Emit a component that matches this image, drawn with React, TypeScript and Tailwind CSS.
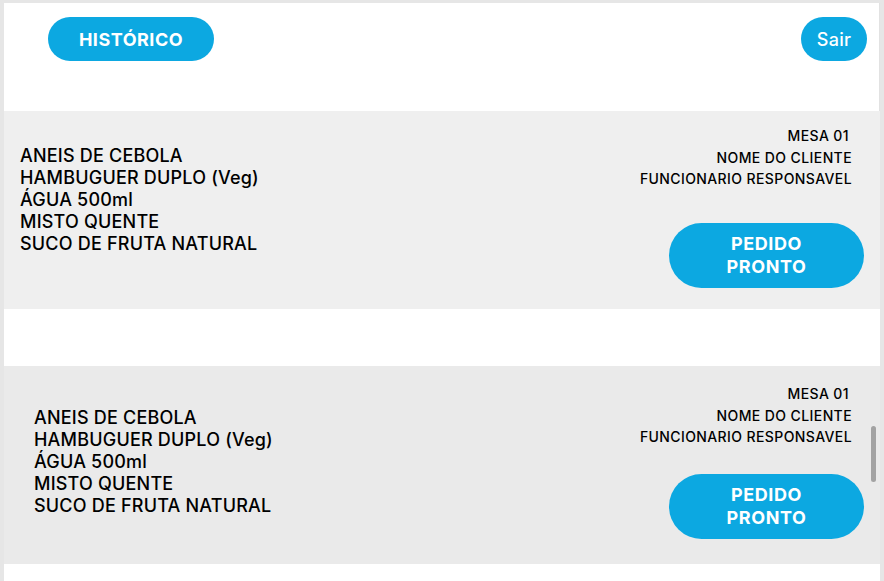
const itens = [
  "ANEIS DE CEBOLA",
  "HAMBUGUER DUPLO (Veg)",
  "ÁGUA 500ml",
  "MISTO QUENTE",
  "SUCO DE FRUTA NATURAL",
];

type PedidoProps = {
  bg: string;
  left: string;
  top: string;
  infoTop: string;
  btnTop: string;
};

const Pedido = ({ bg, left, top, infoTop, btnTop }: PedidoProps) => {
  return (
    <div className={`flex justify-between h-[198px] ${bg}`}>
      <ul className={`${left} ${top} text-[18px] leading-[22px] font-medium tracking-[0.2px] text-black`}>
        {itens.map((item) => (
          <li key={item}>{item}</li>
        ))}
      </ul>
      <div className={`flex flex-col items-end pr-4 ${infoTop}`}>
        <div className="mr-[12px] text-right text-[14px] leading-[21.5px] font-medium tracking-[0.4px] text-black">
          <p className="mr-[3px]">MESA 01</p>
          <p>NOME DO CLIENTE</p>
          <p>FUNCIONARIO RESPONSAVEL</p>
        </div>
        <button
          className={`${btnTop} w-[195px] h-[65px] rounded-full bg-[#0ca8e1] text-white font-bold text-[18px] leading-[23px] tracking-[0.6px]`}
        >
          PEDIDO
          <br />
          PRONTO
        </button>
      </div>
    </div>
  );
};

export default function App() {
  return (
    <div
      className="relative w-[884px] h-[581px] overflow-hidden bg-white border-t-[3px] border-l-4 border-r-4 border-[#e6e6e6]"
      style={{ fontFamily: "Inter, 'Noto Sans', sans-serif" }}
    >
      {/* topo */}
      <header className="flex justify-between items-start h-[108px] pt-[14px] pl-[44px] pr-3 border-r border-[#e2e2e2]">
        <button className="w-[166px] h-[44px] rounded-full bg-[#0ca8e1] text-white font-bold text-[18px] tracking-[0.5px]">
          HISTÓRICO
        </button>
        <button className="w-[66px] h-[44px] rounded-full bg-[#0ca8e1] text-white font-medium text-[18px] tracking-[0.3px]">
          Sair
        </button>
      </header>

      <Pedido bg="bg-[#efefef]" left="pl-4" top="pt-[34px]" infoTop="pt-[14px]" btnTop="mt-[33px]" />
      <div className="h-[57px]" />
      <Pedido bg="bg-[#eaeaea]" left="pl-[30px]" top="pt-[41px]" infoTop="pt-[17px]" btnTop="mt-[26px]" />

      {/* barra de rolagem */}
      <div className="absolute left-[867px] top-[423px] w-[5px] h-[56px] rounded-full bg-[#a3a3a3]" />
    </div>
  );
}
